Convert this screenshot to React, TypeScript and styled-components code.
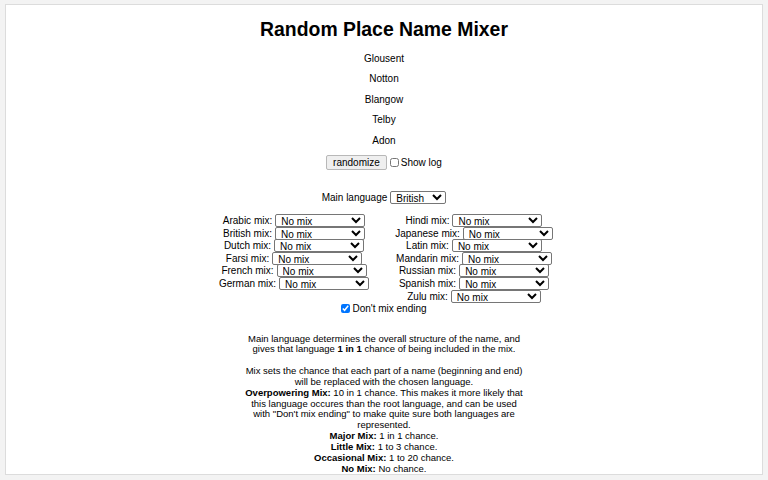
import React from 'react'
import styled, { createGlobalStyle } from 'styled-components'

const GlobalStyle = createGlobalStyle`
  html, body {
    margin: 0;
    padding: 0;
    background: #f3f3f3;
  }
  body {
    font-family: "Liberation Sans", Arial, sans-serif;
    color: #000;
  }
`

const Card = styled.div`
  margin: 4px 5px;
  height: 471px;
  box-sizing: border-box;
  background: #fff;
  border: 1px solid #dcdcdc;
  text-align: center;
  font-size: 10px;
  overflow: hidden;
`

const Title = styled.h1`
  margin: 13px 0 8px;
  font-size: 19.4px;
  line-height: 23px;
  font-weight: bold;
`

const Name = styled.p`
  margin: 0;
  line-height: 20.4px;
`

const Controls = styled.div`
  display: flex;
  justify-content: center;
  align-items: center;
  gap: 3px;
  margin-top: 1px;
  height: 20px;
`

const Button = styled.button`
  font-family: inherit;
  font-size: 10px;
  height: 15px;
  padding: 0 6px;
  border: 1px solid #b8b8b8;
  border-radius: 2px;
  background: #efefef;
  color: #000;
`

const CheckLabel = styled.label`
  display: inline-flex;
  align-items: center;
  gap: 2px;
`

const Check = styled.input.attrs({ type: 'checkbox' })`
  margin: 0;
  width: 9px;
  height: 9px;
`

const MainRow = styled.div`
  display: flex;
  justify-content: center;
  align-items: center;
  gap: 3px;
  margin-top: 19px;
`

const Select = styled.select<{ $w?: number }>`
  font-family: inherit;
  font-size: 10px;
  height: 13px;
  width: ${p => p.$w || 90}px;
  padding: 0 1px;
  border: 1px solid #767676;
  border-radius: 2px;
  background: #fff;
  color: #000;
`

const Mixes = styled.div`
  display: grid;
  grid-template-columns: 180px 180px;
  justify-content: center;
  margin-top: 10px;
`

const Column = styled.div`
  display: flex;
  flex-direction: column;
`

const MixRow = styled.label`
  display: flex;
  justify-content: center;
  align-items: center;
  gap: 3px;
  height: 12.67px;
`

const EndingRow = styled.div`
  display: flex;
  justify-content: center;
  margin-top: 0;
`

const Help = styled.div`
  width: 280px;
  margin: 20px auto 0;
  line-height: 10.83px;
  font-size: 9.5px;
`

const HelpPara = styled.p`
  margin: 0 0 10.83px;
`

const HelpBody = styled.p`
  margin: 0;
`

const left = ['Arabic', 'British', 'Dutch', 'Farsi', 'French', 'German']
const right = ['Hindi', 'Japanese', 'Latin', 'Mandarin', 'Russian', 'Spanish', 'Zulu']
const names = ['Glousent', 'Notton', 'Blangow', 'Telby', 'Adon']

const MixSelect = () => (
  <Select defaultValue="none">
    <option value="none">No mix</option>
    <option value="occasional">Occasional mix</option>
    <option value="little">Little mix</option>
    <option value="major">Major mix</option>
    <option value="over">Overpowering mix</option>
  </Select>
)

const App = () => {
  return (
    <>
      <GlobalStyle />
      <Card>
        <Title>Random Place Name Mixer</Title>
        {names.map(n => <Name key={n}>{n}</Name>)}
        <Controls>
          <Button>randomize</Button>
          <CheckLabel><Check />Show log</CheckLabel>
        </Controls>
        <MainRow>
          Main language
          <Select $w={56} defaultValue="British">
            {[...left, ...right].map(l => <option key={l}>{l}</option>)}
          </Select>
        </MainRow>
        <Mixes>
          <Column>
            {left.map(l => <MixRow key={l}>{l} mix: <MixSelect /></MixRow>)}
          </Column>
          <Column>
            {right.map(l => <MixRow key={l}>{l} mix: <MixSelect /></MixRow>)}
          </Column>
        </Mixes>
        <EndingRow>
          <CheckLabel><Check defaultChecked />Don't mix ending</CheckLabel>
        </EndingRow>
        <Help>
          <HelpPara>
            Main language determines the overall structure of the name, and gives that language <b>1 in 1</b> chance of being included in the mix.
          </HelpPara>
          <HelpBody>
            Mix sets the chance that each part of a name (beginning and end) will be replaced with the chosen language.<br />
            <b>Overpowering Mix:</b> 10 in 1 chance. This makes it more likely that this language occures than the root language, and can be used with "Don't mix ending" to make quite sure both languages are represented.<br />
            <b>Major Mix:</b> 1 in 1 chance.<br />
            <b>Little Mix:</b> 1 to 3 chance.<br />
            <b>Occasional Mix:</b> 1 to 20 chance.<br />
            <b>No Mix:</b> No chance.
          </HelpBody>
        </Help>
      </Card>
    </>
  )
}

export default App
